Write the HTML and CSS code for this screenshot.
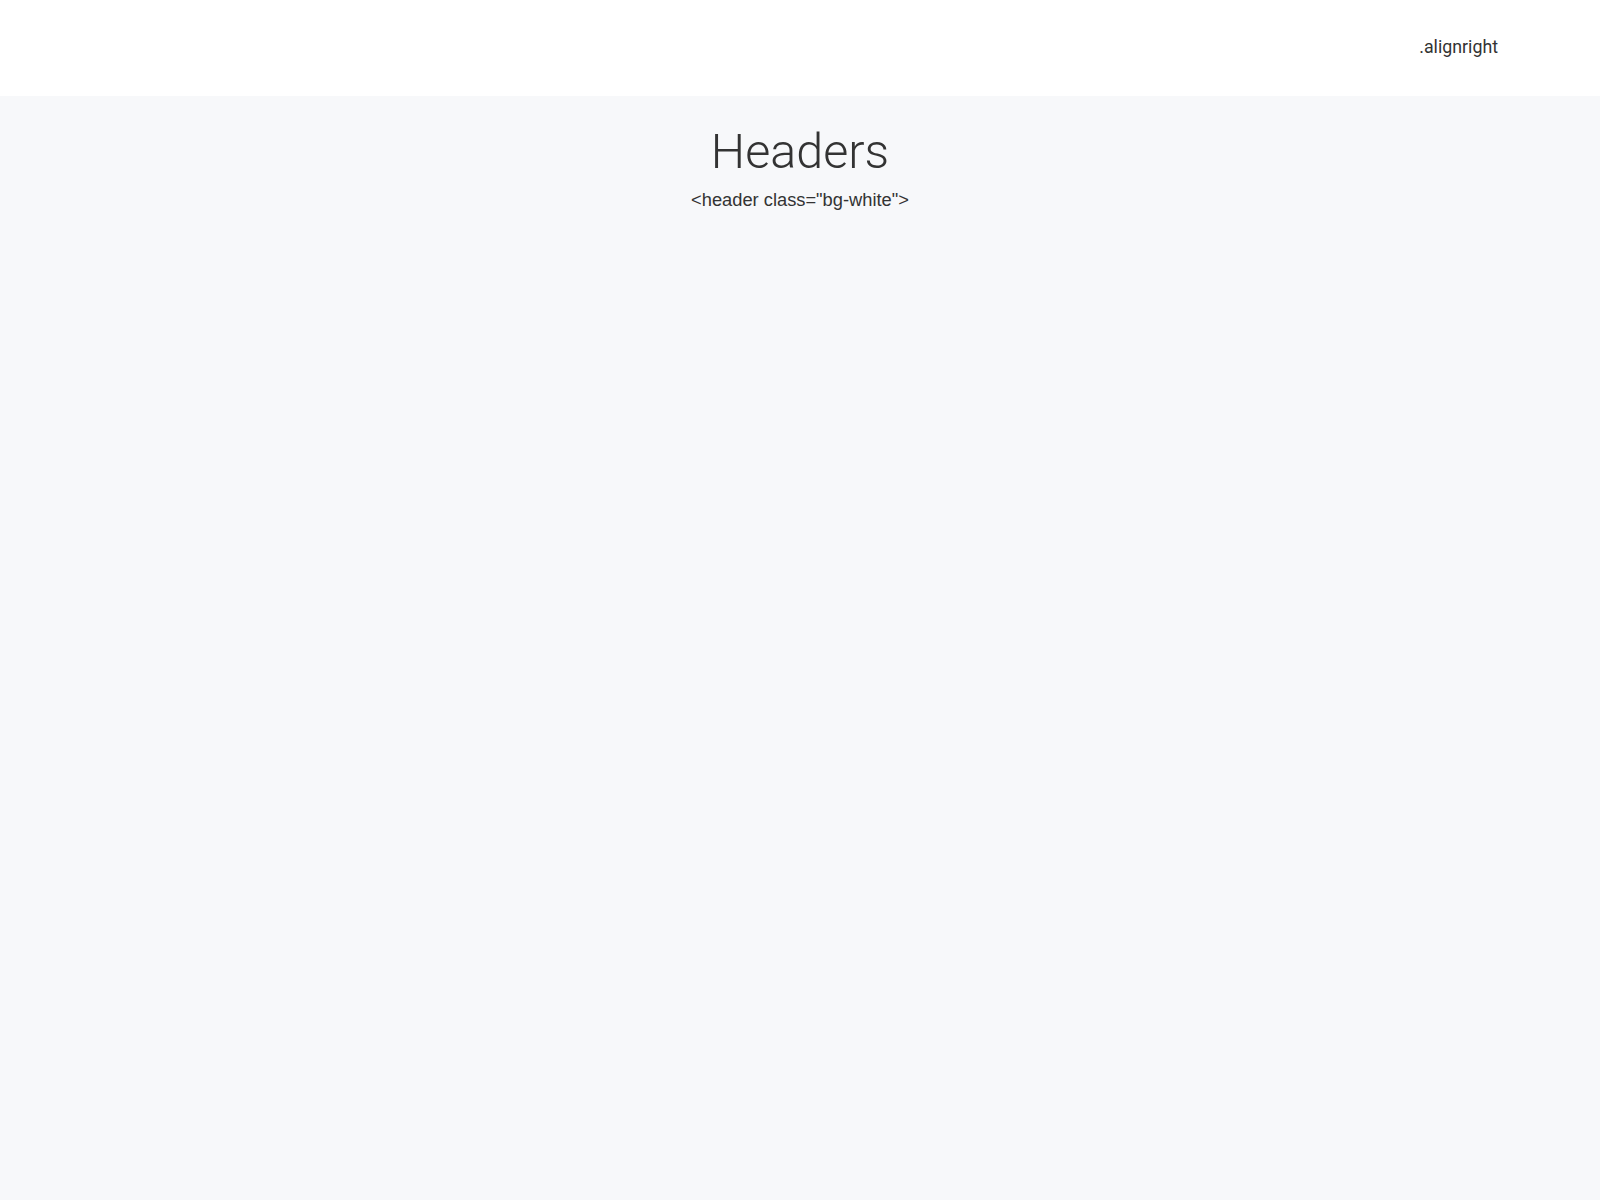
FILE: index.html
```html
<!DOCTYPE html>
<html>
<head>
<meta charset="utf-8">
<link rel="stylesheet" href="styles.css">
</head>
<body>
<header class="bg-white">
  <div class="alignright">.alignright</div>
</header>
<main class="content">
  <h1 class="title">Headers</h1>
  <p class="subtitle">&lt;header class="bg-white"&gt;</p>
</main>
</body>
</html>
```

FILE: styles.css
```css
html, body {
  margin: 0;
  padding: 0;
  height: 100%;
}
body {
  background: #f7f8fa;
  color: #333;
  font-family: Roboto, "Liberation Sans", sans-serif;
}
.bg-white {
  background: #fff;
  height: 96px;
  box-sizing: border-box;
  padding: 0 102px 4px 0;
  display: flex;
  align-items: center;
  justify-content: flex-end;
}
.alignright {
  font-size: 17.8px;
  color: #333;
}
.content {
  text-align: center;
  padding-top: 27px;
}
.title {
  margin: 0;
  font-weight: 300;
  font-size: 48.5px;
  line-height: 1.2;
  color: #333;
}
.subtitle {
  margin: 8px 0 0;
  font-family: "Liberation Sans", Arial, sans-serif;
  font-size: 18.3px;
  color: #333;
}
```
